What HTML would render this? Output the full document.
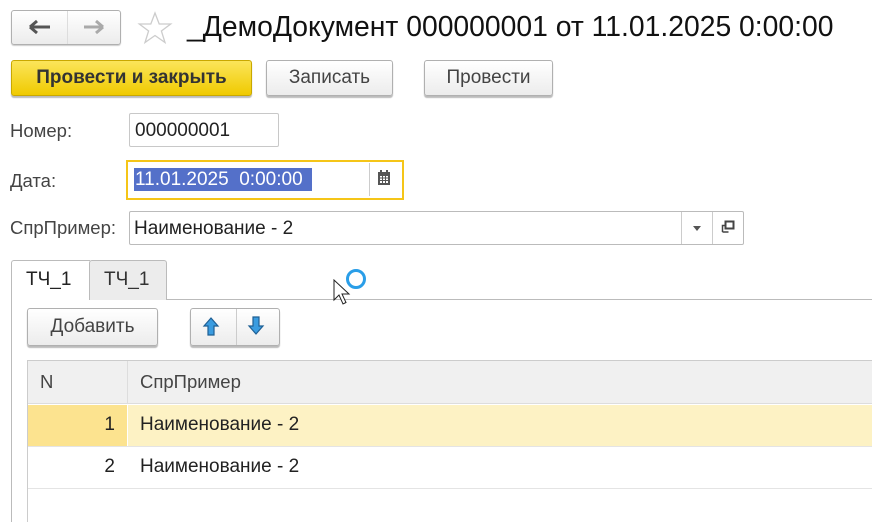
<!DOCTYPE html>
<html><head><meta charset="utf-8"><style>
*{box-sizing:border-box;margin:0;padding:0}
body{width:872px;height:521px;overflow:hidden;background:#fff;font-family:"Liberation Sans",Arial,sans-serif;position:relative;color:#333}
.a{position:absolute}
.btn{position:absolute;border:1px solid #b0b0b0;border-radius:3px;background:linear-gradient(#fff,#ececec);box-shadow:0 2px 1px #bbb;font-size:19px;color:#444;text-align:center}
.lbl{position:absolute;font-size:18.5px;color:#444}
.inp{position:absolute;border:1px solid #c8c8c8;border-radius:2px;font-size:19px;color:#222}
</style></head><body>
<div class="btn" style="left:11px;top:10px;width:110px;height:35px;box-shadow:0 1px 1px #ccc"></div>
<div class="a" style="left:67px;top:11px;width:1px;height:33px;background:#ddd"></div>
<svg class="a" style="left:28px;top:19px" width="24" height="16"><path d="M2 8h20M2 8l7-6M2 8l7 6" stroke="#555" stroke-width="3" fill="none"/></svg>
<svg class="a" style="left:82px;top:19px" width="24" height="16"><path d="M2 8h19M21 8l-7-6M21 8l-7 6" stroke="#aaa" stroke-width="3" fill="none"/></svg>
<svg class="a" style="left:137px;top:11px" width="36" height="34"><path d="M18 2l4.2 11h11.5l-9.3 7 3.6 11.5L18 24.5 8 31.5l3.6-11.5-9.3-7h11.5z" fill="none" stroke="#ccc" stroke-width="1.3"/></svg>
<div class="a" style="left:187px;top:10px;font-size:28.3px;color:#111;white-space:nowrap">_ДемоДокумент 000000001 от 11.01.2025 0:00:00</div>
<div class="btn" style="left:11px;top:60px;width:241px;height:36px;background:linear-gradient(#fbe55a,#f0ca00);border-color:#c9a800;font-weight:bold;color:#333;line-height:34px">Провести и закрыть</div>
<div class="btn" style="left:266px;top:60px;width:127px;height:36px;line-height:34px">Записать</div>
<div class="btn" style="left:424px;top:60px;width:129px;height:36px;line-height:34px">Провести</div>
<div class="lbl" style="left:10px;top:120px">Номер:</div>
<div class="inp" style="left:129px;top:113px;width:150px;height:34px;padding:6px 5px">000000001</div>
<div class="lbl" style="left:10px;top:170px">Дата:</div>
<div class="a" style="left:126px;top:160px;width:278px;height:40px;border:2px solid #f5c518"></div>
<div class="a" style="left:134px;top:168px;width:178px;height:23px;background:#5470c9;color:#fff;font-size:19px;line-height:23px;padding-left:1px;white-space:pre">11.01.2025  0:00:00</div>
<div class="a" style="left:369px;top:163px;width:1px;height:33px;background:#ccc"></div>
<svg class="a" style="left:377px;top:170px" width="14" height="16"><rect x="1" y="2" width="12" height="13" fill="#555"/><rect x="3" y="6" width="8" height="7" fill="#fff"/><path d="M3 8h8M3 10.5h8M5.5 6v7M8.5 6v7" stroke="#555"/><rect x="3" y="0" width="2" height="3" fill="#555"/><rect x="9" y="0" width="2" height="3" fill="#555"/></svg>
<div class="lbl" style="left:10px;top:217px">СпрПример:</div>
<div class="inp" style="left:129px;top:211px;width:615px;height:34px;padding:6px 4px;border-color:#bbb">Наименование - 2</div>
<div class="a" style="left:681px;top:212px;width:1px;height:32px;background:#ccc"></div>
<div class="a" style="left:712px;top:212px;width:1px;height:32px;background:#ccc"></div>
<div class="a" style="left:693px;top:226px;border-left:4px solid transparent;border-right:4px solid transparent;border-top:5px solid #555"></div>
<svg class="a" style="left:719px;top:218px" width="18" height="18"><rect x="6.5" y="3.5" width="8" height="7" fill="none" stroke="#444" stroke-width="2"/><path d="M3.5 14V7.5h3M3.5 14h6" fill="none" stroke="#444" stroke-width="1.5"/></svg>
<div class="a" style="left:89px;top:299px;width:783px;height:1px;background:#bbb"></div>
<div class="a" style="left:11px;top:260px;width:79px;height:262px;border:1px solid #bbb;border-bottom:none;border-right:none;border-radius:3px 0 0 0"></div>
<div class="a" style="left:89px;top:260px;width:78px;height:40px;background:#ececec;border:1px solid #bbb;border-bottom:none;border-radius:3px 3px 0 0"></div>
<div class="a" style="left:26px;top:269px;font-size:19px;color:#222">ТЧ_1</div>
<div class="a" style="left:104px;top:269px;font-size:19px;color:#333">ТЧ_1</div>
<div class="a" style="left:346px;top:269px;width:20px;height:20px;border:3px solid #2a9ee8;border-radius:50%"></div>
<svg class="a" style="left:333px;top:279px" width="20" height="28"><path d="M1 1v20l5-5 4 9 3-1.5-4-8.5h7z" fill="#fff" stroke="#222" stroke-width="1"/></svg>
<div class="btn" style="left:27px;top:308px;width:131px;height:38px;line-height:36px">Добавить</div>
<div class="btn" style="left:190px;top:308px;width:90px;height:38px"></div>
<div class="a" style="left:236px;top:309px;width:1px;height:36px;background:#ccc"></div>
<svg class="a" style="left:201px;top:316px" width="20" height="22"><path d="M10 2l7 8h-4v9H7v-9H3z" fill="#3a9ce0" stroke="#1e5f94" stroke-width="1.2"/></svg>
<svg class="a" style="left:246px;top:314px" width="20" height="22"><path d="M10 20l7-8h-4V3H7v9H3z" fill="#3a9ce0" stroke="#1e5f94" stroke-width="1.2"/></svg>
<div class="a" style="left:27px;top:360px;width:845px;height:162px;border-left:1px solid #ccc;border-top:1px solid #ccc"></div>
<div class="a" style="left:28px;top:361px;width:844px;height:43px;background:#f0f0f0;border-bottom:1px solid #ddd"></div>
<div class="a" style="left:127px;top:361px;width:1px;height:43px;background:#ddd"></div>
<div class="a" style="left:40px;top:371px;font-size:18.5px;color:#444">N</div>
<div class="a" style="left:140px;top:371px;font-size:18.5px;color:#444">СпрПример</div>
<div class="a" style="left:28px;top:405px;width:99px;height:41px;background:#fce38f"></div>
<div class="a" style="left:128px;top:405px;width:744px;height:41px;background:#fdf2c4"></div>
<div class="a" style="left:28px;top:446px;width:844px;height:1px;background:#e4e4e4"></div>
<div class="a" style="left:28px;top:488px;width:844px;height:1px;background:#e4e4e4"></div>
<div class="a" style="left:28px;top:414px;width:87px;text-align:right;font-size:19px;color:#222">1</div>
<div class="a" style="left:140px;top:414px;font-size:19px;color:#222">Наименование - 2</div>
<div class="a" style="left:28px;top:456px;width:87px;text-align:right;font-size:19px;color:#222">2</div>
<div class="a" style="left:140px;top:456px;font-size:19px;color:#222">Наименование - 2</div>
</body></html>
